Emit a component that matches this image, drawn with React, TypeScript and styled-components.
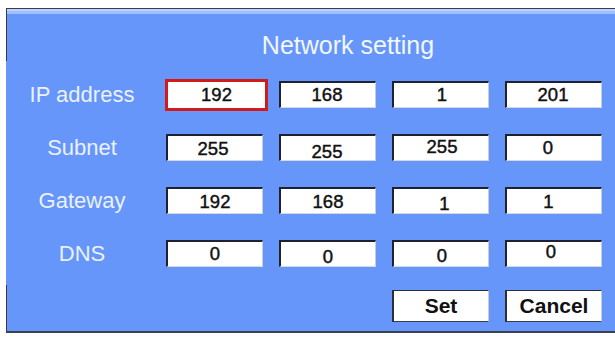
import React from "react";
import styled, { createGlobalStyle } from "styled-components";

const Global = createGlobalStyle`
  html, body { margin: 0; padding: 0; background: #ffffff; }
  body { width: 615px; height: 337px; overflow: hidden; font-family: "Liberation Sans", Arial, sans-serif; }
`;

const Panel = styled.div`
  box-sizing: border-box;
  margin: 8px 0 0 6px;
  height: 325px;
  border-top: 1px solid #3a3e48;
  border-bottom: 2px solid #3c4250;
  padding-left: 1px;
  background:
    linear-gradient(to bottom, #363a44 0 52px, transparent 52px 276px, #363a44 276px) left top / 1px 100% no-repeat,
    linear-gradient(to bottom, #bcd4fb 0 2px, #9fc0fa 2px 5px, #6696fa 5px);
  display: flex;
  flex-direction: column;
`;

const Title = styled.div`
  height: 59px;
  box-sizing: border-box;
  padding: 13px 0 0 74px;
  display: flex;
  align-items: center;
  justify-content: center;
  color: #f2f6ff;
  font-size: 25px;
`;

const Grid = styled.div`
  display: grid;
  grid-template-columns: 143px repeat(4, 97px);
  grid-template-rows: repeat(4, 53px) 51px;
  column-gap: 16px;
  align-items: center;
`;

const Label = styled.div`
  padding-left: 7px;
  text-align: center;
  color: #eaf1ff;
  font-size: 22px;
`;

const Field = styled.div<{ $focused?: boolean }>`
  box-sizing: border-box;
  background: #ffffff;
  display: flex;
  align-items: center;
  justify-content: center;
  ${(p) =>
    p.$focused
      ? `
    width: 103px;
    height: 32px;
    margin-left: -1px;
    border: 3px solid #d21a1a;
  `
      : `
    width: 97px;
    height: 27px;
    border-top: 2px solid #1e2230;
    border-left: 2px solid #1e2230;
    border-right: 1px solid #c9cdd6;
    border-bottom: 1px solid #d4d8e0;
  `}
`;

const Value = styled.span<{ $dx: number; $dy: number }>`
  font-size: 18.5px;
  color: #111;
  -webkit-text-stroke: 0.45px #111;
  transform: translate(${(p) => p.$dx}px, ${(p) => p.$dy}px);
`;

const Button = styled.div`
  box-sizing: border-box;
  width: 97px;
  height: 32px;
  background: #ffffff;
  border-top: 1px solid #2a2e38;
  border-left: 2px solid #2a2e38;
  border-bottom: 1px solid #3a3e48;
  border-right: 1px solid #c8ccd4;
  display: flex;
  align-items: center;
  justify-content: center;
  font-size: 21px;
  font-weight: bold;
  color: #111;
`;

const Spacer = styled.div``;

type Cell = { v: string; dx?: number; dy?: number; focused?: boolean };

const rows: { label: string; cells: Cell[] }[] = [
  {
    label: "IP address",
    cells: [
      { v: "192", focused: true },
      { v: "168", dx: -1 },
      { v: "1", dx: 1 },
      { v: "201", dx: -1 },
    ],
  },
  {
    label: "Subnet",
    cells: [
      { v: "255", dx: -2, dy: 1 },
      { v: "255", dx: -1, dy: 4 },
      { v: "255", dx: 1, dy: -1.5 },
      { v: "0", dx: -6 },
    ],
  },
  {
    label: "Gateway",
    cells: [
      { v: "192", dx: 0, dy: 1 },
      { v: "168", dx: 0, dy: 0.5 },
      { v: "1", dx: 3.5, dy: 3 },
      { v: "1", dx: -5.5, dy: 1 },
    ],
  },
  {
    label: "DNS",
    cells: [
      { v: "0", dx: 0, dy: -0.5 },
      { v: "0", dx: 0, dy: 3 },
      { v: "0", dx: 1, dy: 2 },
      { v: "0", dx: -3, dy: -2.5 },
    ],
  },
];

export default function App() {
  return (
    <>
      <Global />
      <Panel>
        <Title>Network setting</Title>
        <Grid>
          {rows.map((r) => (
            <React.Fragment key={r.label}>
              <Label>{r.label}</Label>
              {r.cells.map((c, i) => (
                <Field key={i} $focused={c.focused}>
                  <Value $dx={c.dx ?? 0} $dy={c.dy ?? 0}>{c.v}</Value>
                </Field>
              ))}
            </React.Fragment>
          ))}
          <Spacer />
          <Spacer />
          <Spacer />
          <Button>Set</Button>
          <Button>Cancel</Button>
        </Grid>
      </Panel>
    </>
  );
}
